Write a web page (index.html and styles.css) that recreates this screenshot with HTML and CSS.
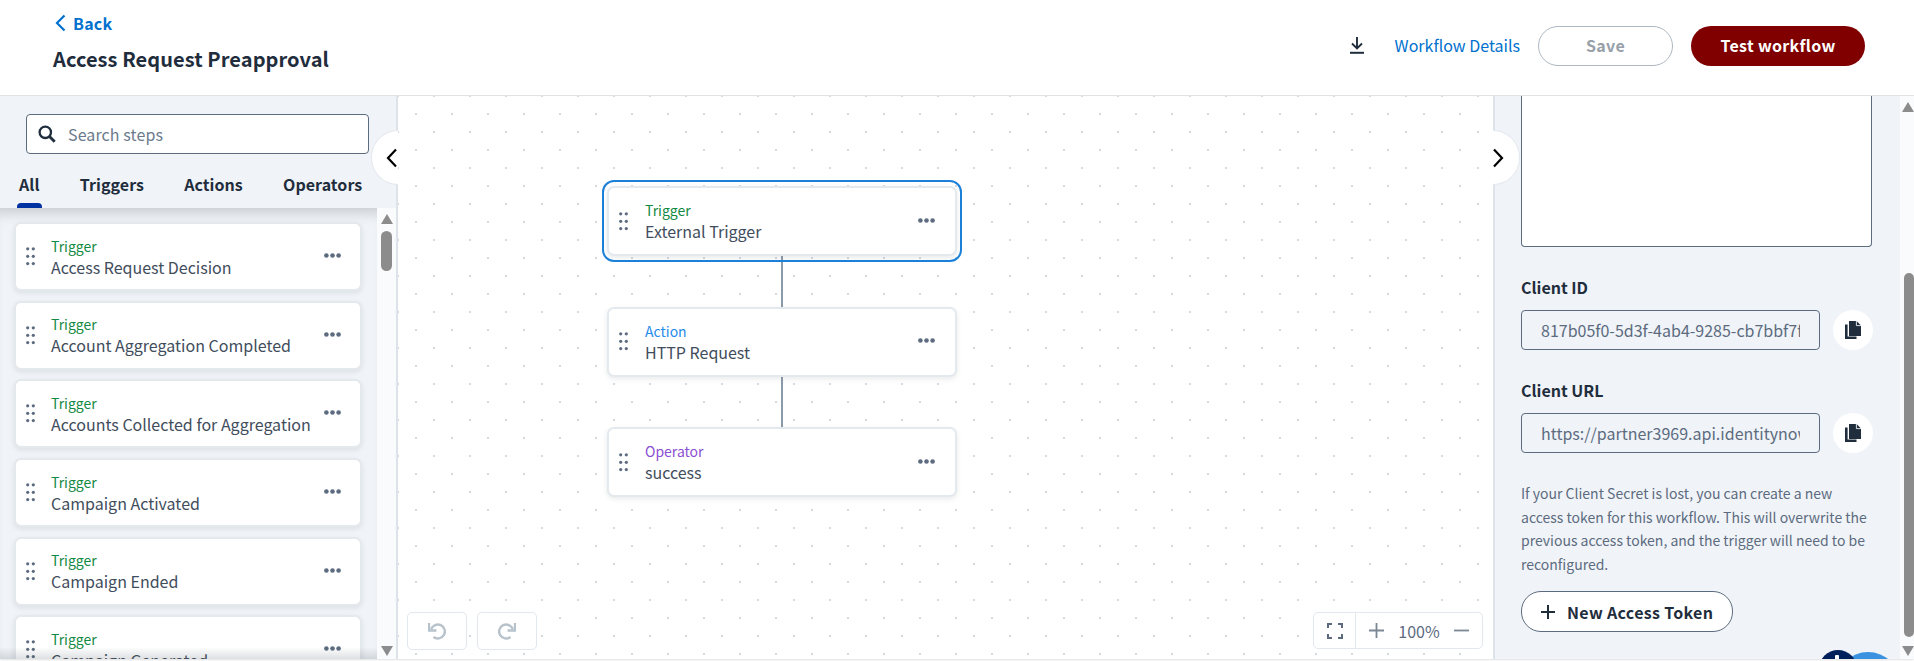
FILE: index.html
```html
<!DOCTYPE html>
<html lang="en">
<head>
<meta charset="utf-8">
<title>Access Request Preapproval</title>
<link rel="stylesheet" href="styles.css">
</head>
<body>
<svg class="sprites" width="0" height="0" aria-hidden="true">
  <symbol id="grip" viewBox="0 0 9 19"><circle cx="1.7" cy="1.8" r="1.6"/><circle cx="7.3" cy="1.8" r="1.6"/><circle cx="1.7" cy="9.3" r="1.6"/><circle cx="7.3" cy="9.3" r="1.6"/><circle cx="1.7" cy="16.6" r="1.6"/><circle cx="7.3" cy="16.6" r="1.6"/></symbol>
  <symbol id="more" viewBox="0 0 17 5"><circle cx="2.4" cy="2.5" r="2.3"/><circle cx="8.5" cy="2.5" r="2.3"/><circle cx="14.6" cy="2.5" r="2.3"/></symbol>
  <symbol id="copy" viewBox="0 0 16 18"><path d="M0 3.5h2.6v12h8.9V18H0z"/><path d="M4 0h7.6L16 4.4V15H4z"/><path d="M11.4 0v4.6H16" fill="none" stroke="#f0f4f8" stroke-width=".9"/></symbol>
</svg>
<div class="page">
  <header class="topbar">
    <div class="titles">
      <a class="back"><svg width="11" height="18" viewBox="0 0 11 18"><path d="M9.5 1.5 2 9l7.5 7.5" fill="none" stroke="currentColor" stroke-width="2.2"/></svg><span>Back</span></a>
      <h1>Access Request Preapproval</h1>
    </div>
    <div class="actions">
      <svg class="download" width="16" height="17" viewBox="0 0 16 17"><path d="M8 0v11M3 6.500 8 11.500l5-5" fill="none" stroke="#1f2d3d" stroke-width="1.900"/><path d="M1 15.800h14" stroke="#1f2d3d" stroke-width="2"/></svg>
      <a class="details">Workflow Details</a>
      <button class="btn save">Save</button>
      <button class="btn test">Test workflow</button>
    </div>
  </header>
  <main class="workspace">
    <aside class="steps">
      <div class="steps-head">
        <label class="search">
          <svg width="18" height="18" viewBox="0 0 18 18"><circle cx="7.300" cy="7.300" r="5.700" fill="none" stroke="#1f2d3d" stroke-width="2.300"/><path d="m11.500 11.500 5.200 5.200" stroke="#1f2d3d" stroke-width="2.800"/></svg>
          <span>Search steps</span>
        </label>
        <nav class="tabs"><a class="tab active">All</a><a class="tab">Triggers</a><a class="tab">Actions</a><a class="tab">Operators</a></nav>
      </div>
      <div class="steps-body">
        <div class="step-list">
          <div class="card"><svg class="grip"><use href="#grip"/></svg><div class="card-text"><span class="kind trigger">Trigger</span><span class="name">Access Request Decision</span></div><svg class="more"><use href="#more"/></svg></div>
          <div class="card"><svg class="grip"><use href="#grip"/></svg><div class="card-text"><span class="kind trigger">Trigger</span><span class="name">Account Aggregation Completed</span></div><svg class="more"><use href="#more"/></svg></div>
          <div class="card"><svg class="grip"><use href="#grip"/></svg><div class="card-text"><span class="kind trigger">Trigger</span><span class="name">Accounts Collected for Aggregation</span></div><svg class="more"><use href="#more"/></svg></div>
          <div class="card"><svg class="grip"><use href="#grip"/></svg><div class="card-text"><span class="kind trigger">Trigger</span><span class="name">Campaign Activated</span></div><svg class="more"><use href="#more"/></svg></div>
          <div class="card"><svg class="grip"><use href="#grip"/></svg><div class="card-text"><span class="kind trigger">Trigger</span><span class="name">Campaign Ended</span></div><svg class="more"><use href="#more"/></svg></div>
          <div class="card"><svg class="grip"><use href="#grip"/></svg><div class="card-text"><span class="kind trigger">Trigger</span><span class="name">Campaign Generated</span></div><svg class="more"><use href="#more"/></svg></div>
        </div>
        <div class="scrollbar left-bar">
          <i class="arrow up"></i>
          <div class="track"><b class="thumb"></b></div>
          <i class="arrow down"></i>
        </div>
      </div>
      <button class="toggle toggle-left" aria-label="Collapse steps"><svg width="11" height="20" viewBox="0 0 11 20"><path d="M10 1.500 2 10l8 8.500" fill="none" stroke="#000" stroke-width="2.200"/></svg></button>
    </aside>
    <section class="canvas">
      <div class="flow">
        <div class="card node selected"><svg class="grip"><use href="#grip"/></svg><div class="card-text"><span class="kind trigger">Trigger</span><span class="name">External Trigger</span></div><svg class="more"><use href="#more"/></svg></div>
        <div class="link"></div>
        <div class="card node"><svg class="grip"><use href="#grip"/></svg><div class="card-text"><span class="kind action">Action</span><span class="name">HTTP Request</span></div><svg class="more"><use href="#more"/></svg></div>
        <div class="link"></div>
        <div class="card node"><svg class="grip"><use href="#grip"/></svg><div class="card-text"><span class="kind operator">Operator</span><span class="name">success</span></div><svg class="more"><use href="#more"/></svg></div>
      </div>
      <div class="history">
        <button class="tool"><svg width="18" height="18" viewBox="0 0 18 18"><path d="M3.200 7.200A7 7 0 1 1 5.500 15" fill="none" stroke="#b8c2cb" stroke-width="2.400"/><path d="M1 1v7.500h7.500" fill="none" stroke="#b8c2cb" stroke-width="2.400"/></svg></button>
        <button class="tool"><svg width="18" height="18" viewBox="0 0 18 18"><path d="M14.800 7.200A7 7 0 1 0 12.500 15" fill="none" stroke="#b8c2cb" stroke-width="2.400"/><path d="M17 1v7.500H9.500" fill="none" stroke="#b8c2cb" stroke-width="2.400"/></svg></button>
      </div>
      <div class="zoombar">
        <span class="fit"><svg width="16" height="16" viewBox="0 0 16 16"><path d="M1 5V1h4M11 1h4v4M15 11v4h-4M5 15H1v-4" fill="none" stroke="#5c6b7f" stroke-width="2"/></svg></span>
        <span class="zoom-main">
          <svg width="15" height="15" viewBox="0 0 15 15"><path d="M7.500 0v15M0 7.500h15" stroke="#7b8794" stroke-width="1.800"/></svg>
          <span class="pct">100%</span>
          <svg width="15" height="15" viewBox="0 0 15 15"><path d="M0 7.500h15" stroke="#7b8794" stroke-width="1.800"/></svg>
        </span>
      </div>
    </section>
    <aside class="config">
      <div class="config-scroll">
        <div class="config-body">
          <div class="secret"></div>
          <label class="field-label first">Client ID</label>
          <div class="copy-row"><input class="field" readonly value="817b05f0-5d3f-4ab4-9285-cb7bbf7f0e1c"><button class="copy" aria-label="Copy client ID"><svg width="16" height="18"><use href="#copy"/></svg></button></div>
          <label class="field-label">Client URL</label>
          <div class="copy-row"><input class="field" readonly value="https://partner3969.api.identitynow.com/beta/workflows"><button class="copy" aria-label="Copy client URL"><svg width="16" height="18"><use href="#copy"/></svg></button></div>
          <p class="note">If your Client Secret is lost, you can create a new access token for this workflow. This will overwrite the previous access token, and the trigger will need to be reconfigured.</p>
          <button class="btn token"><svg width="14" height="14" viewBox="0 0 14 14"><path d="M7 0v14M0 7h14" stroke="#1f2d3d" stroke-width="2"/></svg><span>New Access Token</span></button>
        </div>
        <div class="scrollbar right-bar">
          <i class="arrow up"></i>
          <div class="track"><b class="thumb"></b></div>
          <i class="arrow down"></i>
        </div>
        <div class="help"><span class="help-bubble"></span><span class="help-badge"></span></div>
      </div>
      <button class="toggle toggle-right" aria-label="Collapse details"><svg width="11" height="20" viewBox="0 0 11 20"><path d="M1 1.500 9 10l-8 8.500" fill="none" stroke="#000" stroke-width="2.200"/></svg></button>
    </aside>
  </main>
</div>
</body>
</html>
```
FILE: styles.css
```css
* { box-sizing: border-box; }
html, body { margin: 0; height: 100%; }
body {
  overflow: hidden;
  background: #fff;
  font-family: "Noto Sans CJK SC", "Source Sans Pro", "Noto Sans", sans-serif;
  font-size: 16px;
  color: #36414f;
}
.sprites { position: absolute; }
button { font: inherit; cursor: pointer; }
.page { display: flex; flex-direction: column; width: 1914px; height: 661px; }

/* top bar */
.topbar {
  flex: none;
  height: 96px;
  border-bottom: 1px solid #e2e5e8;
  display: flex;
  justify-content: space-between;
  padding: 0 49px 0 53px;
}
.titles { display: flex; flex-direction: column; padding-top: 12px; }
.back { display: flex; align-items: center; gap: 7px; height: 22px; padding-left: 2px; color: #0071ce; font-weight: 600; line-height: 22px; letter-spacing: .25px; }
h1 { margin: 12px 0 0; font-size: 20px; line-height: 26px; font-weight: 600; color: #1f2d3d; letter-spacing: .07px; }
.actions { display: flex; align-items: center; height: 92px; }
.download { margin: -2px 30px 0 0; }
.details { color: #0071ce; line-height: 22px; margin: -2px 18px 0 0; }
.btn { height: 40px; padding: 0 0 2px; border-radius: 20px; font-weight: 600; line-height: 20px; letter-spacing: .33px; }
.save { width: 135px; margin-right: 18px; background: #fff; border: 1px solid #aeb8c2; color: #97a0a9; }
.test { width: 174px; background: #800000; border: 0; color: #fff; }

/* layout */
.workspace { flex: none; height: 563px; display: flex; box-shadow: 0 1px 2px rgba(0,0,0,.12); }
.steps { position: relative; flex: none; width: 398px; display: flex; flex-direction: column; background: #f0f4f8; border-right: 2px solid #dde3e9; }
.canvas {
  position: relative;
  flex: 1;
  background-color: #fff;
  background-image: radial-gradient(circle at 1px 1px, #d2d8de 0.8px, transparent 1.1px), radial-gradient(circle at 1px 1px, #d2d8de 0.8px, transparent 1.1px);
  background-size: 36px 36px;
  background-position: -1px -1px, 17px 17px;
}
.config { position: relative; flex: none; width: 421px; border-left: 2px solid #dde3e9; }
.config-scroll { position: relative; height: 100%; overflow: hidden; display: flex; background: #f0f4f8; }

/* steps panel */
.steps-head { flex: none; height: 112px; position: relative; z-index: 1; }
.search {
  display: flex; align-items: center; gap: 12px;
  width: 343px; height: 40px;
  margin: 18px 0 0 26px; padding-left: 11px;
  background: #fff; border: 1px solid #5c6b7f; border-radius: 4px;
  color: #6b7a8c; line-height: 22px; letter-spacing: .1px;
}
.tabs { display: flex; gap: 40.200px; padding: 18px 0 0 19px; letter-spacing: .05px; }
.tab { position: relative; font-weight: 600; line-height: 24px; color: #1f2d3d; }
.tab.active::after { content: ""; position: absolute; left: -2px; right: -2px; top: 31px; height: 5px; background: #0033a1; border-radius: 4px 4px 0 0; }
.steps-body { flex: 1; min-height: 0; display: flex; }
.step-list {
  position: relative; flex: 1; min-width: 0; overflow: hidden;
  display: flex; flex-direction: column; gap: 9.700px;
  padding: 14px 15px 0 14px;
  box-shadow: inset 0 14px 12px -8px rgba(60,70,80,.2);
}
.step-list::after { content: ""; position: absolute; left: 0; right: 0; bottom: 0; height: 12px; background: linear-gradient(transparent, rgba(70,80,90,.18)); }

/* card */
.card {
  position: relative; flex: none;
  display: flex; align-items: center;
  height: 69px; padding: 0 19px 0 10px;
  background: #fff; border: 2px solid #e4e9ee; border-radius: 7px;
  box-shadow: 0 2px 5px rgba(70,80,90,.12);
}
.grip { flex: none; width: 9px; height: 19px; fill: #5c6b7f; margin-right: 16px; }
.card-text { flex: 1; min-width: 0; display: flex; flex-direction: column; }
.kind { font-size: 14px; line-height: 21px; white-space: nowrap; }
.name { line-height: 21px; white-space: nowrap; color: #414d5c; }
.trigger { color: #138a43; }
.action { color: #1f8ceb; }
.operator { color: #8a4fd3; }
.more { flex: none; width: 17px; height: 5px; fill: #5c6b7f; margin-top: -2px; }

/* scrollbars */
.scrollbar { flex: none; display: flex; flex-direction: column; background: #fafbfc; }
.left-bar { width: 19px; padding: 6px 3px 3px; align-items: center; }
.right-bar { width: 14px; padding: 6px 0 3px; align-items: flex-end; }
.arrow { flex: none; width: 0; height: 0; border-left: 6.500px solid transparent; border-right: 6.500px solid transparent; }
.arrow.up { border-bottom: 10px solid #8c8c8c; }
.arrow.down { border-top: 10px solid #8c8c8c; }
.track { flex: 1; width: 100%; position: relative; }
.thumb { display: block; width: 11px; background: #8c8c8c; border-radius: 6px; }
.left-bar .thumb { height: 40px; margin: 7px auto 0; }
.right-bar .thumb { height: 364px; margin: 161px 0 0 auto; width: 10px; }

/* canvas */
.flow { position: absolute; left: 209px; top: 90px; width: 350px; display: flex; flex-direction: column; }
.node { height: 70px; padding-right: 20px; }
.node .grip { margin-right: 17px; }
.node.selected::before { content: ""; position: absolute; inset: -8px -7px; border: 2px solid #1b80d8; border-radius: 12px; }
.link { width: 2px; height: 50.500px; margin-left: 174px; background: #8c9bab; }
.history { position: absolute; left: 9px; bottom: 9px; display: flex; gap: 10px; }
.tool { width: 60px; height: 38px; padding: 0; display: flex; align-items: center; justify-content: center; background: #fff; border: 1px solid #e3e8ee; border-radius: 5px; }
.zoombar { position: absolute; right: 10px; bottom: 10px; width: 170px; height: 37px; display: flex; background: #fff; border: 1px solid #e3e8ee; border-radius: 5px; }
.fit { flex: none; width: 42px; display: flex; align-items: center; justify-content: center; border-right: 1px solid #e3e8ee; }
.zoom-main { flex: 1; display: flex; align-items: center; justify-content: space-between; padding: 0 13px; color: #5c6b7f; }
.pct { font-size: 16px; line-height: 20px; }

/* toggles */
.toggle { position: absolute; top: 34px; width: 27px; height: 55px; padding: 0; background: #fff; border: 1px solid #e3e8ee; z-index: 3; display: flex; align-items: center; }
.toggle-left { right: -2px; border-right: 0; border-radius: 28px 0 0 28px; justify-content: flex-end; padding-right: 1px; }
.toggle-right { left: -2px; border-left: 0; border-radius: 0 28px 28px 0; justify-content: flex-start; }

/* config */
.config-body { flex: none; width: 405px; padding-left: 26px; }
.secret { width: 351px; height: 151px; background: #fff; border: 1px solid #5c6b7f; border-top: 0; border-radius: 0 0 4px 4px; }
.field-label { display: block; font-weight: 700; color: #1f2d3d; line-height: 22px; margin: 0 0 12px; }
.field-label.first { margin-top: 29px; }
.copy-row { display: flex; align-items: center; gap: 13px; width: 352px; height: 40px; margin-bottom: 29px; }
.field { width: 299px; height: 40px; padding: 0 19px; font: inherit; line-height: 22px; color: #5c6b7f; background: #f0f4f8; border: 1px solid #5c6b7f; border-radius: 4px; outline: 0; }
.copy { flex: none; width: 40px; height: 40px; padding: 0; display: flex; align-items: center; justify-content: center; background: #fff; border: 0; border-radius: 50%; fill: #1f2d3d; }
.note { width: 351px; margin: 0; font-size: 14px; line-height: 23.500px; color: #5c6b7f; }
.token { display: flex; align-items: center; gap: 12px; width: 212px; height: 41px; margin-top: 15px; padding: 0 0 0 19px; background: #fff; border: 1px solid #5c6b7f; color: #1f2d3d; }
.right-bar { margin-left: auto; }
.help { position: absolute; left: 324px; top: 554px; width: 84px; height: 70px; }
.help-badge { position: absolute; left: 0; top: 0; width: 38px; height: 38px; border-radius: 50%; background: #00205b; }
.help-badge::after { content: ""; position: absolute; left: 16px; top: 5px; width: 4px; height: 6px; background: #fff; border-radius: 1px 1px 0 0; }
.help-bubble { position: absolute; left: 17px; top: 2px; width: 64px; height: 64px; border-radius: 50%; background: #3a92e0; }
```
